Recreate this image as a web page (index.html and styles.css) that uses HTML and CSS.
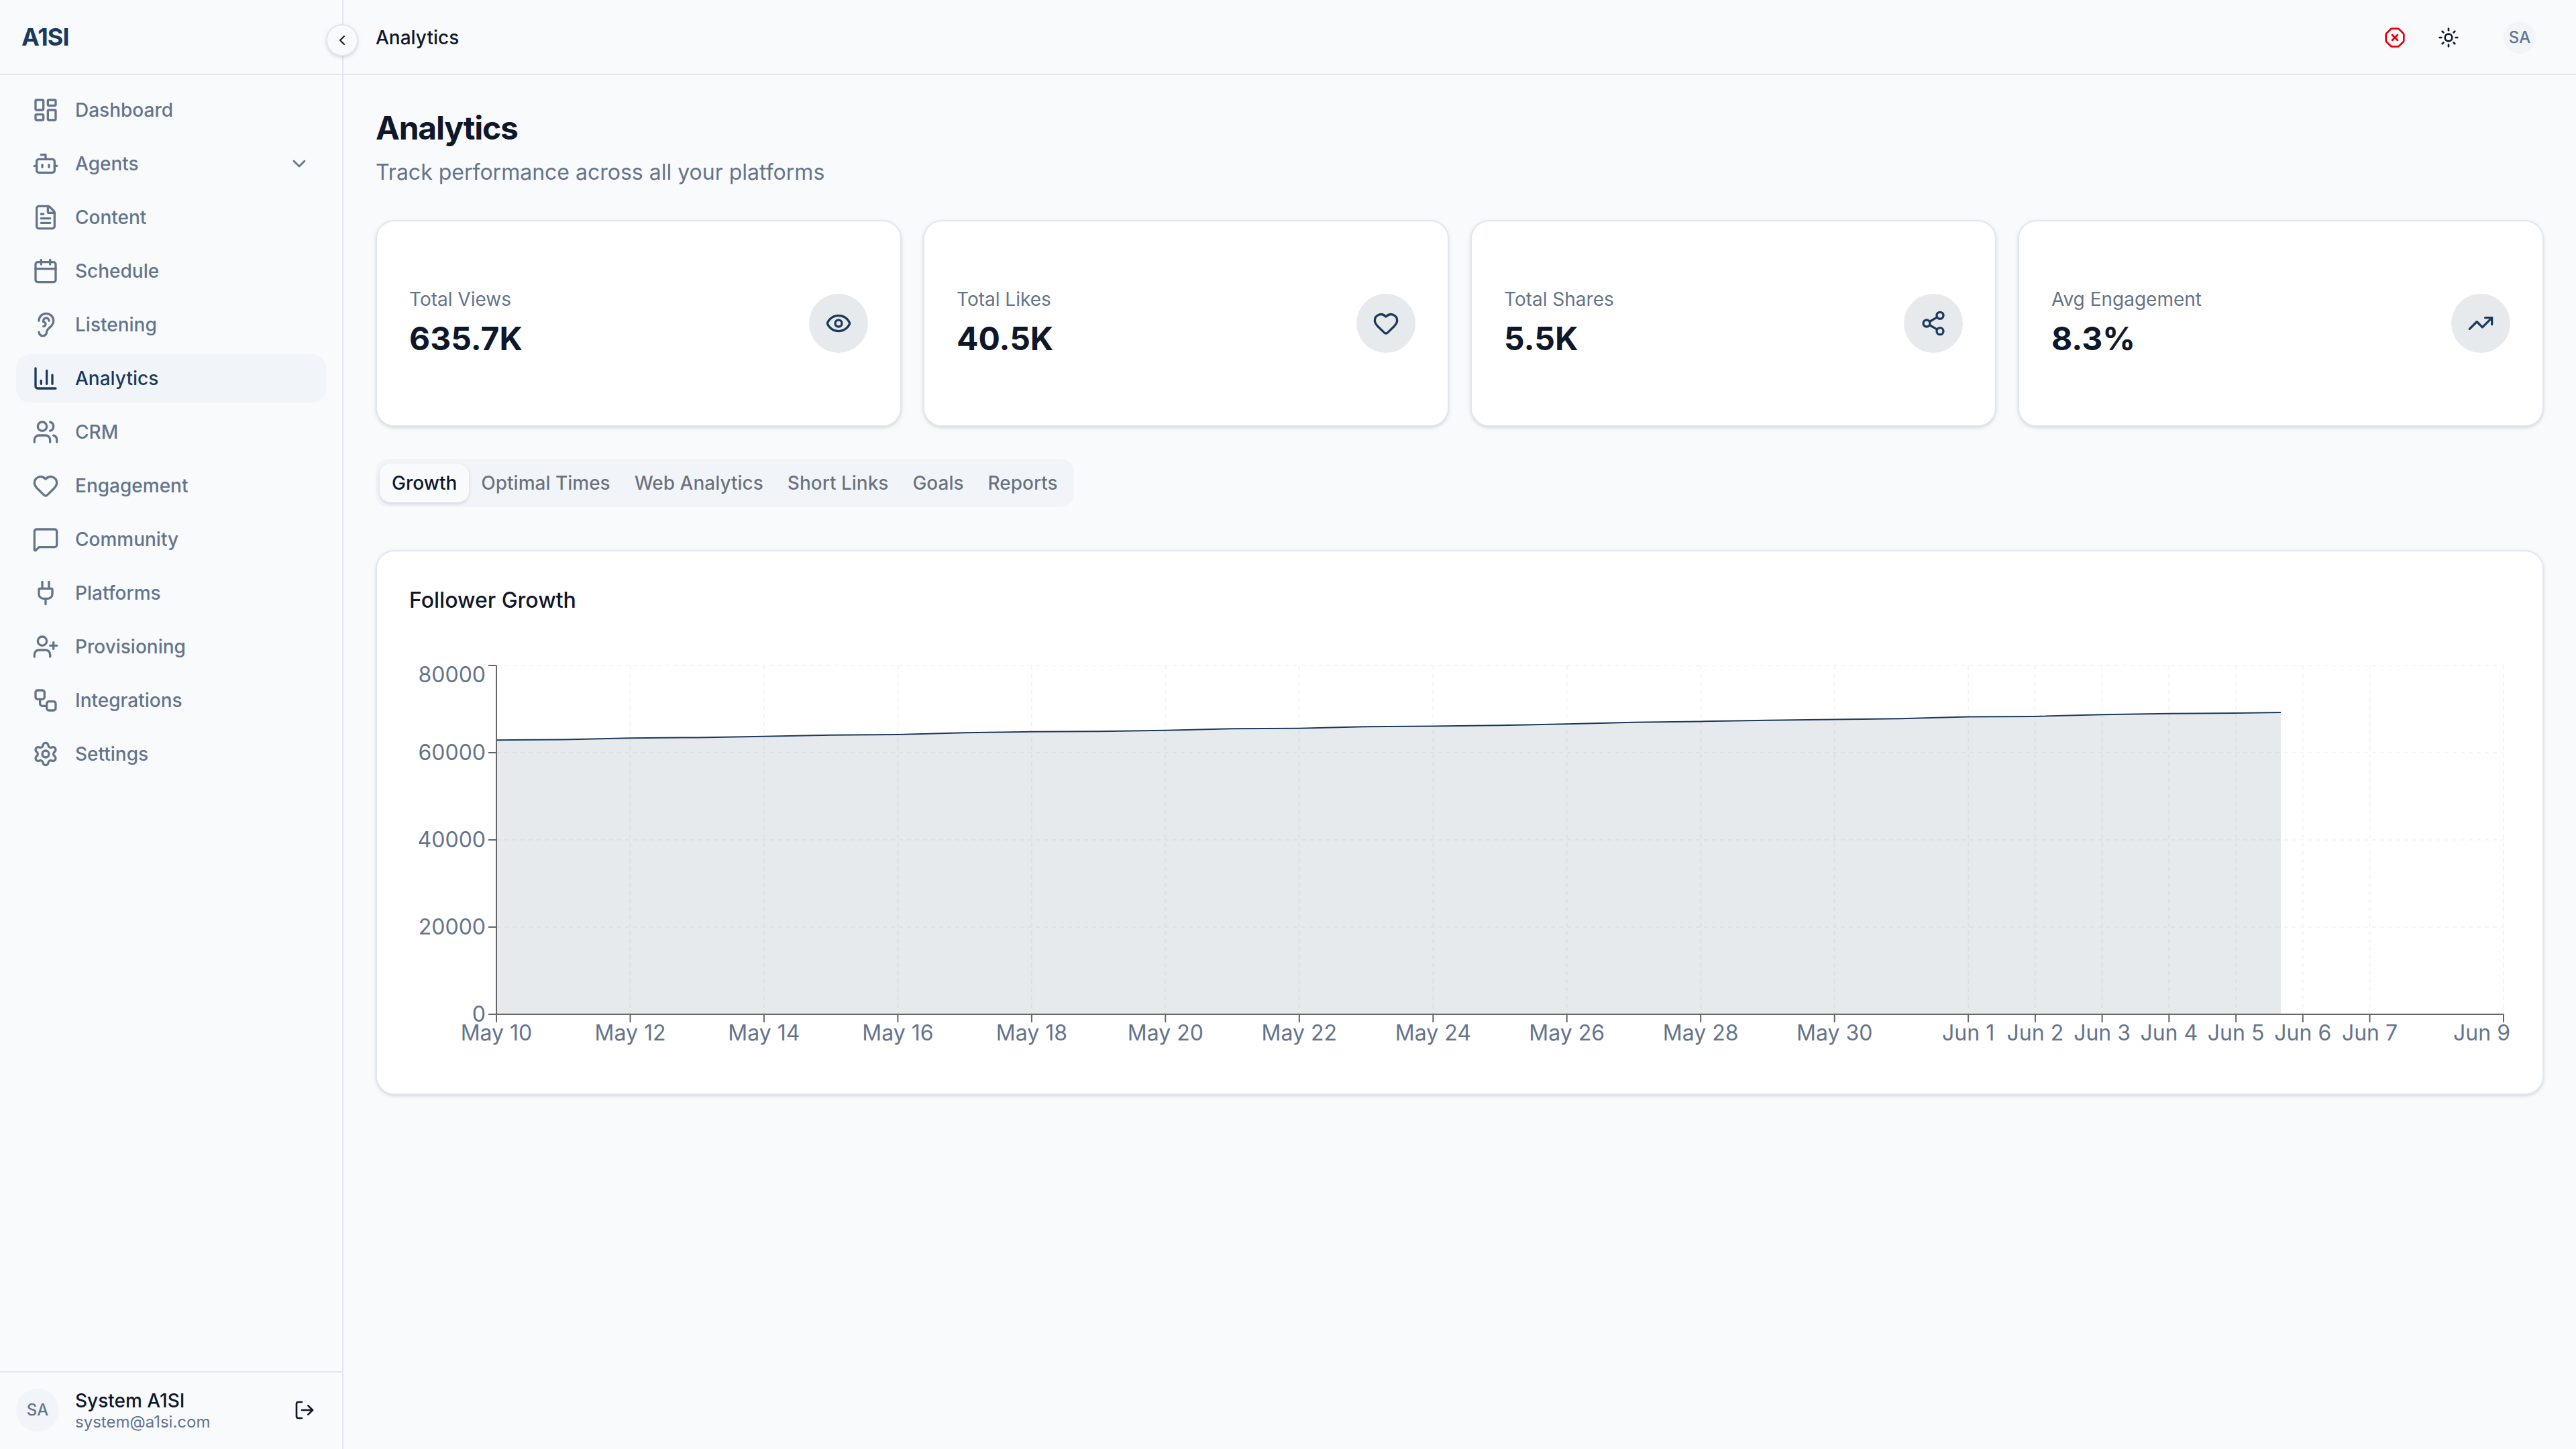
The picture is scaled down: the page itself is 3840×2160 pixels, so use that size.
FILE: index.html
```html
<!DOCTYPE html>
<html lang="en">
<head>
<meta charset="utf-8">
<title>Analytics</title>
<link rel="stylesheet" href="styles.css">
</head>
<body>
<div class="app">
  <aside class="sidebar">
    <div class="brand">A1SI</div>
    <nav class="nav">
      <a class="nav-item"><svg class="icon" viewBox="0 0 24 24"><rect width="7" height="9" x="3" y="3" rx="1"/><rect width="7" height="5" x="14" y="3" rx="1"/><rect width="7" height="9" x="14" y="12" rx="1"/><rect width="7" height="5" x="3" y="16" rx="1"/></svg>Dashboard</a>
      <a class="nav-item"><svg class="icon" viewBox="0 0 24 24"><path d="M12 8V4H8"/><rect width="16" height="12" x="4" y="8" rx="2"/><path d="M2 14h2"/><path d="M20 14h2"/><path d="M15 13v2"/><path d="M9 13v2"/></svg>Agents<svg class="icon icon-sm nav-chevron" viewBox="0 0 24 24"><path d="m6 9 6 6 6-6"/></svg></a>
      <a class="nav-item"><svg class="icon" viewBox="0 0 24 24"><path d="M6 22a2 2 0 0 1-2-2V4a2 2 0 0 1 2-2h8a2.4 2.4 0 0 1 1.704.706l3.588 3.588A2.4 2.4 0 0 1 20 8v12a2 2 0 0 1-2 2z"/><path d="M14 2v5a1 1 0 0 0 1 1h5"/><path d="M10 9H8"/><path d="M16 13H8"/><path d="M16 17H8"/></svg>Content</a>
      <a class="nav-item"><svg class="icon" viewBox="0 0 24 24"><path d="M8 2v4"/><path d="M16 2v4"/><rect width="18" height="18" x="3" y="4" rx="2"/><path d="M3 10h18"/></svg>Schedule</a>
      <a class="nav-item"><svg class="icon" viewBox="0 0 24 24"><path d="M6 8.5a6.5 6.5 0 1 1 13 0c0 6-6 6-6 10a3.5 3.5 0 1 1-7 0"/><path d="M15 8.5a2.5 2.5 0 0 0-5 0v1a2 2 0 1 1 0 4"/></svg>Listening</a>
      <a class="nav-item active"><svg class="icon" viewBox="0 0 24 24"><path d="M3 3v16a2 2 0 0 0 2 2h16"/><path d="M18 17V9"/><path d="M13 17V5"/><path d="M8 17v-3"/></svg>Analytics</a>
      <a class="nav-item"><svg class="icon" viewBox="0 0 24 24"><path d="M16 21v-2a4 4 0 0 0-4-4H6a4 4 0 0 0-4 4v2"/><path d="M16 3.128a4 4 0 0 1 0 7.744"/><path d="M22 21v-2a4 4 0 0 0-3-3.87"/><circle cx="9" cy="7" r="4"/></svg>CRM</a>
      <a class="nav-item"><svg class="icon" viewBox="0 0 24 24"><path d="M2 9.5a5.5 5.5 0 0 1 9.591-3.676.56.56 0 0 0 .818 0A5.49 5.49 0 0 1 22 9.5c0 2.29-1.5 4-3 5.5l-5.492 5.313a2 2 0 0 1-3 .019L5 15c-1.5-1.5-3-3.2-3-5.5"/></svg>Engagement</a>
      <a class="nav-item"><svg class="icon" viewBox="0 0 24 24"><path d="M22 17a2 2 0 0 1-2 2H6.828a2 2 0 0 0-1.414.586l-2.202 2.202A.71.71 0 0 1 2 21.286V5a2 2 0 0 1 2-2h16a2 2 0 0 1 2 2z"/></svg>Community</a>
      <a class="nav-item"><svg class="icon" viewBox="0 0 24 24"><path d="M12 22v-5"/><path d="M15 8V2"/><path d="M17 8a1 1 0 0 1 1 1v4a4 4 0 0 1-4 4h-4a4 4 0 0 1-4-4V9a1 1 0 0 1 1-1z"/><path d="M9 8V2"/></svg>Platforms</a>
      <a class="nav-item"><svg class="icon" viewBox="0 0 24 24"><path d="M16 21v-2a4 4 0 0 0-4-4H6a4 4 0 0 0-4 4v2"/><circle cx="9" cy="7" r="4"/><path d="M19 8v6"/><path d="M22 11h-6"/></svg>Provisioning</a>
      <a class="nav-item"><svg class="icon" viewBox="0 0 24 24"><rect width="8" height="8" x="3" y="3" rx="2"/><path d="M7 11v4a2 2 0 0 0 2 2h4"/><rect width="8" height="8" x="13" y="13" rx="2"/></svg>Integrations</a>
      <a class="nav-item"><svg class="icon" viewBox="0 0 24 24"><path d="M9.671 4.136a2.34 2.34 0 0 1 4.659 0 2.34 2.34 0 0 0 3.319 1.915 2.34 2.34 0 0 1 2.33 4.033 2.34 2.34 0 0 0 0 3.831 2.34 2.34 0 0 1-2.33 4.033 2.34 2.34 0 0 0-3.319 1.915 2.34 2.34 0 0 1-4.659 0 2.34 2.34 0 0 0-3.32-1.915 2.34 2.34 0 0 1-2.33-4.033 2.34 2.34 0 0 0 0-3.831A2.34 2.34 0 0 1 6.35 6.051a2.34 2.34 0 0 0 3.319-1.915"/><circle cx="12" cy="12" r="3"/></svg>Settings</a>
    </nav>
    <div class="account">
      <span class="avatar avatar-lg">SA</span>
      <div class="account-text">
        <div class="account-name">System A1SI</div>
        <div class="account-mail">system@a1si.com</div>
      </div>
      <button class="icon-button logout"><svg class="icon icon-sm" viewBox="0 0 24 24"><path d="m16 17 5-5-5-5"/><path d="M21 12H9"/><path d="M9 21H5a2 2 0 0 1-2-2V5a2 2 0 0 1 2-2h4"/></svg></button>
    </div>
    <button class="collapse"><svg class="icon icon-xs" viewBox="0 0 24 24"><path d="m15 18-6-6 6-6"/></svg></button>
  </aside>

  <div class="page">
    <header class="topbar">
      <div class="topbar-title">Analytics</div>
      <div class="topbar-actions">
        <button class="icon-button alert"><svg class="icon icon-sm" viewBox="0 0 24 24"><path d="m15 9-6 6"/><path d="M2.586 16.726A2 2 0 0 1 2 15.312V8.688a2 2 0 0 1 .586-1.414l4.688-4.688A2 2 0 0 1 8.688 2h6.624a2 2 0 0 1 1.414.586l4.688 4.688A2 2 0 0 1 22 8.688v6.624a2 2 0 0 1-.586 1.414l-4.688 4.688a2 2 0 0 1-1.414.586H8.688a2 2 0 0 1-1.414-.586z"/><path d="m9 9 6 6"/></svg></button>
        <button class="icon-button"><svg class="icon icon-sm" viewBox="0 0 24 24"><circle cx="12" cy="12" r="4"/><path d="M12 2v2"/><path d="M12 20v2"/><path d="m4.93 4.93 1.41 1.41"/><path d="m17.66 17.66 1.41 1.41"/><path d="M2 12h2"/><path d="M20 12h2"/><path d="m6.34 17.66-1.41 1.41"/><path d="m19.07 4.93-1.41 1.41"/></svg></button>
        <span class="avatar">SA</span>
      </div>
    </header>

    <main class="content">
      <h1 class="heading">Analytics</h1>
      <p class="subheading">Track performance across all your platforms</p>

      <section class="stats">
        <article class="card stat">
          <div><div class="stat-label">Total Views</div><div class="stat-value">635.7K</div></div>
          <span class="stat-icon"><svg class="icon" viewBox="0 0 24 24"><path d="M2.062 12.348a1 1 0 0 1 0-.696 10.75 10.75 0 0 1 19.876 0 1 1 0 0 1 0 .696 10.75 10.75 0 0 1-19.876 0"/><circle cx="12" cy="12" r="3"/></svg></span>
        </article>
        <article class="card stat">
          <div><div class="stat-label">Total Likes</div><div class="stat-value">40.5K</div></div>
          <span class="stat-icon"><svg class="icon" viewBox="0 0 24 24"><path d="M2 9.5a5.5 5.5 0 0 1 9.591-3.676.56.56 0 0 0 .818 0A5.49 5.49 0 0 1 22 9.5c0 2.29-1.5 4-3 5.5l-5.492 5.313a2 2 0 0 1-3 .019L5 15c-1.5-1.5-3-3.2-3-5.5"/></svg></span>
        </article>
        <article class="card stat">
          <div><div class="stat-label">Total Shares</div><div class="stat-value">5.5K</div></div>
          <span class="stat-icon"><svg class="icon" viewBox="0 0 24 24"><circle cx="18" cy="5" r="3"/><circle cx="6" cy="12" r="3"/><circle cx="18" cy="19" r="3"/><path d="M8.59 13.51l6.83 3.98"/><path d="M15.41 6.51l-6.82 3.98"/></svg></span>
        </article>
        <article class="card stat">
          <div><div class="stat-label">Avg Engagement</div><div class="stat-value">8.3%</div></div>
          <span class="stat-icon"><svg class="icon" viewBox="0 0 24 24"><path d="M16 7h6v6"/><path d="m22 7-8.5 8.5-5-5L2 17"/></svg></span>
        </article>
      </section>

      <div class="tabs">
        <button class="tab selected">Growth</button>
        <button class="tab">Optimal Times</button>
        <button class="tab">Web Analytics</button>
        <button class="tab">Short Links</button>
        <button class="tab">Goals</button>
        <button class="tab">Reports</button>
      </div>

      <section class="card chart-card">
        <h2 class="chart-title">Follower Growth</h2>
        <svg class="chart" viewBox="610 982 3132 600">
          <g class="grid">
            <path d="M740 992H3732M740 1122H3732M740 1252H3732M740 1382H3732M740 1512H3732"/>
            <path d="M939.5 992V1512M1138.9 992V1512M1338.4 992V1512M1537.9 992V1512M1737.3 992V1512M1936.8 992V1512M2136.3 992V1512M2335.7 992V1512M2535.2 992V1512M2734.7 992V1512M2934.1 992V1512M3033.9 992V1512M3133.6 992V1512M3233.3 992V1512M3333.1 992V1512M3432.8 992V1512M3532.5 992V1512M3732 992V1512"/>
          </g>
          <path class="area" d="M740 1103.3L840 1102.5L939.5 1100.3L1039 1099.4L1138.9 1097.8L1238.7 1095.7L1338.4 1095L1438 1092.3L1537.9 1090.8L1637.6 1090.3L1737.3 1088.7L1837 1086.3L1936.8 1085.7L2036.5 1083.3L2136.3 1082.5L2236 1081.2L2335.7 1079.3L2435.5 1076.8L2535.2 1075.4L2635 1073.8L2734.7 1072.6L2834.4 1071.2L2934.1 1068.4L3033.9 1067.9L3133.6 1065.2L3233.3 1063.7L3333.1 1063.1L3400 1062V1512H740Z"/>
          <path class="line" d="M740 1103.3L840 1102.5L939.5 1100.3L1039 1099.4L1138.9 1097.8L1238.7 1095.7L1338.4 1095L1438 1092.3L1537.9 1090.8L1637.6 1090.3L1737.3 1088.7L1837 1086.3L1936.8 1085.7L2036.5 1083.3L2136.3 1082.5L2236 1081.2L2335.7 1079.3L2435.5 1076.8L2535.2 1075.4L2635 1073.8L2734.7 1072.6L2834.4 1071.2L2934.1 1068.4L3033.9 1067.9L3133.6 1065.2L3233.3 1063.7L3333.1 1063.1L3400 1062"/>
          <path class="axis" d="M740 992V1512M740 1512H3732M728 992H740M728 1122H740M728 1252H740M728 1382H740M728 1512H740M740 1512V1524M939.5 1512V1524M1138.9 1512V1524M1338.4 1512V1524M1537.9 1512V1524M1737.3 1512V1524M1936.8 1512V1524M2136.3 1512V1524M2335.7 1512V1524M2535.2 1512V1524M2734.7 1512V1524M2934.1 1512V1524M3033.9 1512V1524M3133.6 1512V1524M3233.3 1512V1524M3333.1 1512V1524M3432.8 1512V1524M3532.5 1512V1524M3732 1512V1524"/>
          <g class="y-labels">
            <text x="724" y="1017.2">80000</text><text x="724" y="1133.4">60000</text><text x="724" y="1263.4">40000</text><text x="724" y="1393.4">20000</text><text x="724" y="1523">0</text>
          </g>
          <g class="x-labels">
            <text x="740" y="1551">May 10</text><text x="939.5" y="1551">May 12</text><text x="1138.9" y="1551">May 14</text><text x="1338.4" y="1551">May 16</text><text x="1537.9" y="1551">May 18</text><text x="1737.3" y="1551">May 20</text><text x="1936.8" y="1551">May 22</text><text x="2136.3" y="1551">May 24</text><text x="2335.7" y="1551">May 26</text><text x="2535.2" y="1551">May 28</text><text x="2734.7" y="1551">May 30</text><text x="2934.1" y="1551">Jun 1</text><text x="3033.9" y="1551">Jun 2</text><text x="3133.6" y="1551">Jun 3</text><text x="3233.3" y="1551">Jun 4</text><text x="3333.1" y="1551">Jun 5</text><text x="3432.8" y="1551">Jun 6</text><text x="3532.5" y="1551">Jun 7</text><text x="3699.5" y="1551">Jun 9</text>
          </g>
        </svg>
      </section>
    </main>
  </div>
</div>
</body>
</html>
```
FILE: styles.css
```css
:root {
  --bg: #f8fafc;
  --card: #ffffff;
  --fg: #0f172a;
  --muted: #f1f5f9;
  --muted-fg: #64748b;
  --primary: #1b3a5b;
  --tint: rgb(16 52 74 / 0.1);
  --border: #e1e7ee;
  --danger: #e7000b;
}

* { box-sizing: border-box; }

body {
  margin: 0;
  background: var(--bg);
  color: var(--fg);
  font-family: Inter, "Liberation Sans", sans-serif;
  font-size: 32px;
  line-height: 48px;
}

h1, h2, p { margin: 0; }

button {
  padding: 0;
  border: 0;
  background: none;
  color: inherit;
  font: inherit;
}

.app { display: flex; height: 2160px; }

.icon {
  flex: none;
  display: block;
  width: 40px;
  height: 40px;
  fill: none;
  stroke: currentColor;
  stroke-width: 2;
  stroke-linecap: round;
  stroke-linejoin: round;
}
.icon-sm { width: 32px; height: 32px; }
.icon-xs { width: 24px; height: 24px; }

/* Sidebar */
.sidebar {
  position: relative;
  flex: none;
  display: flex;
  flex-direction: column;
  width: 512px;
  border-right: 2px solid var(--border);
}
.brand {
  display: flex;
  align-items: center;
  height: 112px;
  padding: 0 32px;
  border-bottom: 2px solid var(--border);
  color: var(--primary);
  font-size: 36px;
  font-weight: 700;
  letter-spacing: -0.025em;
}
.nav {
  flex: 1;
  display: flex;
  flex-direction: column;
  gap: 8px;
  padding: 16px 24px;
}
.nav-item {
  display: flex;
  align-items: center;
  gap: 24px;
  height: 72px;
  padding: 0 24px;
  border-radius: 20px;
  color: var(--muted-fg);
  font-size: 28px;
  font-weight: 500;
  line-height: 40px;
}
.nav-item.active { background: var(--muted); color: var(--primary); }
.nav-chevron { margin-left: auto; }

.account {
  display: flex;
  align-items: center;
  gap: 24px;
  height: 116px;
  padding: 0 24px 2px;
  border-top: 2px solid var(--border);
}
.account-text { flex: 1; padding-top: 1px; }
.account-name { font-size: 28px; font-weight: 500; line-height: 34px; }
.account-mail { color: var(--muted-fg); font-size: 24px; line-height: 30px; }

.avatar {
  display: flex;
  align-items: center;
  justify-content: center;
  width: 48px;
  height: 48px;
  border-radius: 50%;
  background: var(--muted);
  color: var(--muted-fg);
  font-size: 24px;
  font-weight: 500;
}
.avatar-lg { width: 64px; height: 64px; }

.icon-button {
  display: flex;
  align-items: center;
  justify-content: center;
  width: 72px;
  height: 72px;
}
.logout { width: 64px; height: 64px; }
.alert { color: var(--danger); }

.collapse {
  position: absolute;
  top: 36px;
  right: -24px;
  display: flex;
  align-items: center;
  justify-content: center;
  width: 48px;
  height: 48px;
  border: 2px solid var(--border);
  border-radius: 50%;
  background: var(--bg);
  box-shadow: 0 2px 6px rgb(0 0 0 / 0.1), 0 2px 4px -2px rgb(0 0 0 / 0.1);
}

/* Page */
.page { flex: 1; display: flex; flex-direction: column; }
.topbar {
  display: flex;
  align-items: center;
  justify-content: space-between;
  height: 112px;
  padding: 2px 48px 0;
  border-bottom: 2px solid var(--border);
}
.topbar-title { font-size: 28px; font-weight: 500; }
.topbar-actions { display: flex; align-items: center; gap: 8px; }
.topbar-actions .avatar { margin: 0 12px 0 38px; }

.content { display: flex; flex-direction: column; padding: 48px; }
.heading {
  font-size: 48px;
  font-weight: 700;
  line-height: 62px;
  letter-spacing: -0.025em;
}
.subheading { margin-top: 11px; color: var(--muted-fg); }

.card {
  border: 2px solid var(--border);
  border-radius: 28px;
  background: var(--card);
  box-shadow: 0 2px 6px rgb(0 0 0 / 0.1), 0 2px 4px -2px rgb(0 0 0 / 0.1);
}
.stats {
  display: grid;
  grid-template-columns: repeat(4, 1fr);
  gap: 32px;
  margin-top: 47px;
}
.stat {
  display: flex;
  align-items: center;
  justify-content: space-between;
  height: 308px;
  padding: 0 48px;
}
.stat-label { color: var(--muted-fg); font-size: 28px; line-height: 40px; }
.stat-value { margin: 8px 0 2px; font-size: 48px; font-weight: 700; line-height: 62px; }
.stat-icon {
  display: flex;
  align-items: center;
  justify-content: center;
  width: 88px;
  height: 88px;
  border-radius: 50%;
  background: var(--tint);
  color: var(--primary);
}

.tabs {
  align-self: flex-start;
  display: flex;
  align-items: center;
  height: 72px;
  margin-top: 48px;
  padding: 6px;
  border-radius: 20px;
  background: var(--muted);
}
.tab {
  height: 58px;
  padding: 0 18px;
  border-radius: 16px;
  color: rgb(15 23 42 / 0.6);
  font-size: 28px;
  font-weight: 500;
  line-height: 40px;
}
.tab.selected {
  background: var(--bg);
  color: var(--fg);
  box-shadow: 0 2px 6px rgb(0 0 0 / 0.1), 0 2px 4px -2px rgb(0 0 0 / 0.1);
}

.chart-card { height: 812px; margin-top: 64px; padding: 49px 48px 0; }
.chart-title { font-size: 32px; font-weight: 500; line-height: 48px; }
.chart { display: block; width: 3132px; height: 600px; margin-top: 63px; }
.grid path { fill: none; stroke: var(--muted); stroke-width: 2; stroke-dasharray: 6 6; }
.area { fill: var(--tint); }
.line { fill: none; stroke: var(--primary); stroke-width: 2; }
.axis { fill: none; stroke: #666666; stroke-width: 2; }
.chart text { fill: var(--muted-fg); font-size: 32px; }
.y-labels { text-anchor: end; }
.x-labels { text-anchor: middle; }
```
